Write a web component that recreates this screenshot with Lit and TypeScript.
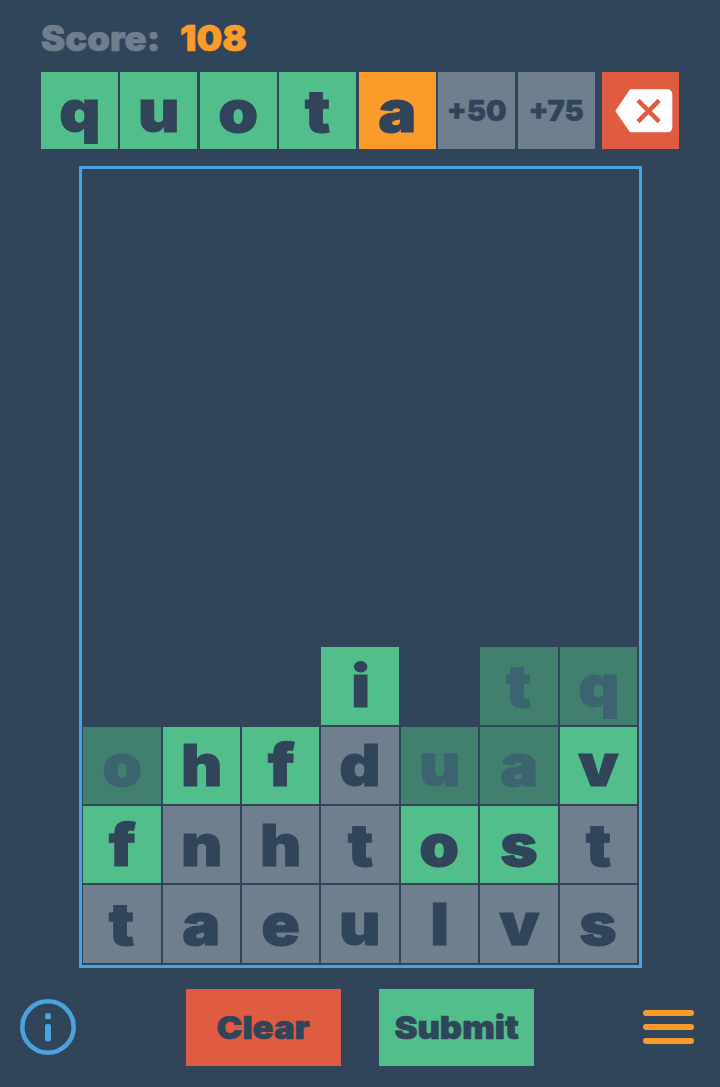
import { LitElement, html, css } from "lit";
import { customElement } from "lit/decorators.js";

type Kind = "g" | "n" | "f" | "e";
const ROWS: [string, Kind][][] = [
  [["", "e"], ["", "e"], ["", "e"], ["i", "g"], ["", "e"], ["t", "f"], ["q", "f"]],
  [["o", "f"], ["h", "g"], ["f", "g"], ["d", "n"], ["u", "f"], ["a", "f"], ["v", "g"]],
  [["f", "g"], ["n", "n"], ["h", "n"], ["t", "n"], ["o", "g"], ["s", "g"], ["t", "n"]],
  [["t", "n"], ["a", "n"], ["e", "n"], ["u", "n"], ["l", "n"], ["v", "n"], ["s", "n"]],
];

@customElement("app-root")
export class AppRoot extends LitElement {
  static styles = css`
    :host {
      display: flex;
      flex-direction: column;
      width: 720px;
      height: 1087px;
      background: #30445a;
      font-family: Inter, "Liberation Sans", Arial, sans-serif;
      font-weight: 900;
      color: #30445a;
      overflow: hidden;
    }
    .w {
      display: inline-block;
      -webkit-text-stroke: 1px currentColor;
      transform: scaleX(1.1);
    }
    .score {
      height: 72px;
      box-sizing: border-box;
      padding: 18px 0 0 41px;
      display: flex;
      font-size: 35px;
      line-height: 40px;
      color: #6f7f8e;
    }
    .score .w {
      -webkit-text-stroke-width: 0.7px;
      transform: scaleX(1.04);
      transform-origin: left center;
    }
    .score .label { width: 139px; }
    .score .num { color: #fb9c2a; }
    .top {
      display: flex;
      gap: 2.45px;
      padding-left: 41px;
      height: 77px;
    }
    .cell {
      width: 77px;
      height: 77px;
      display: flex;
      align-items: center;
      justify-content: center;
      font-size: 58px;
      line-height: 70px;
      flex: none;
    }
    .g { background: #52be8c; }
    .n { background: #6f7f8e; }
    .o { background: #fb9c2a; }
    .f { background: #41806f; color: #3c6470; }
    .bonus { font-size: 29px; }
    .bonus .w {
      -webkit-text-stroke-width: 0.4px;
      transform: none;
    }
    .back {
      width: 77px;
      height: 77px;
      margin-left: 4.55px;
      background: #e05c40;
      flex: none;
    }
    .back svg { display: block; }
    .board {
      margin: 17px 0 0 79px;
      width: 562.500px;
      height: 802px;
      box-sizing: border-box;
      border: 3px solid #4aa3dc;
      padding: 0 1.300px 2.300px;
      display: grid;
      grid-template-columns: repeat(7, 77.4px);
      grid-auto-rows: 77.4px;
      gap: 2px;
      align-content: end;
    }
    .board .cell { width: auto; height: auto; }
    .board .e { background: transparent; }
    .foot {
      flex: 1;
      display: grid;
      grid-template-columns: 1fr auto 1fr;
      align-items: center;
      padding: 0 20px;
    }
    .btns {
      display: flex;
      gap: 38.5px;
      margin-top: -1px;
    }
    .btn {
      width: 154.5px;
      height: 77px;
      display: flex;
      align-items: center;
      justify-content: center;
      font-size: 32px;
    }
    .btn .w {
      -webkit-text-stroke-width: 0.7px;
      transform: scaleX(1.08);
    }
    .red { background: #e05c40; }
    .info { display: block; margin-top: -1px; }
    .menu {
      justify-self: end;
      display: flex;
      flex-direction: column;
      gap: 8px;
      width: 51px;
      margin: -1px 6.5px 0 0;
    }
    .menu i {
      display: block;
      height: 6px;
      border-radius: 3px;
      background: #fb9c2a;
    }
  `;

  private cell(ch: string, k: Kind) {
    return html`<div class="cell ${k}">${ch ? html`<span class="w">${ch}</span>` : ""}</div>`;
  }

  render() {
    return html`
      <div class="score">
        <div class="label"><span class="w">Score:</span></div>
        <div class="num"><span class="w">108</span></div>
      </div>
      <div class="top">
        ${[..."quot"].map((c) => this.cell(c, "g"))}
        <div class="cell o"><span class="w">a</span></div>
        <div class="cell n bonus"><span class="w">+50</span></div>
        <div class="cell n bonus"><span class="w">+75</span></div>
        <div class="back">
          <svg width="77" height="77" viewBox="0 0 77 77">
            <path
              d="M28.500 18.300H65.500a3.800 3.800 0 0 1 3.800 3.800V55.500a3.800 3.800 0 0 1-3.800 3.800H28.500L14.500 39Z"
              fill="#fff"
              stroke="#fff"
              stroke-width="2"
              stroke-linejoin="round"
            />
            <path d="M36 28.400l21.200 21.200M57.200 28.400l-21.200 21.200" stroke="#e05c40" stroke-width="4.500" fill="none" />
          </svg>
        </div>
      </div>
      <div class="board">
        ${ROWS.flat().map(([c, k]) => this.cell(c, k))}
      </div>
      <div class="foot">
        <svg class="info" width="56" height="56" viewBox="0 0 56 56">
          <circle cx="28" cy="28" r="25.700" fill="none" stroke="#4aa3dc" stroke-width="4.600" />
          <rect x="25" y="14" width="6" height="6.200" rx="2" fill="#4aa3dc" />
          <rect x="25" y="25" width="6" height="17.400" rx="2" fill="#4aa3dc" />
        </svg>
        <div class="btns">
          <div class="btn red"><span class="w">Clear</span></div>
          <div class="btn g"><span class="w">Submit</span></div>
        </div>
        <div class="menu"><i></i><i></i><i></i></div>
      </div>
    `;
  }
}
